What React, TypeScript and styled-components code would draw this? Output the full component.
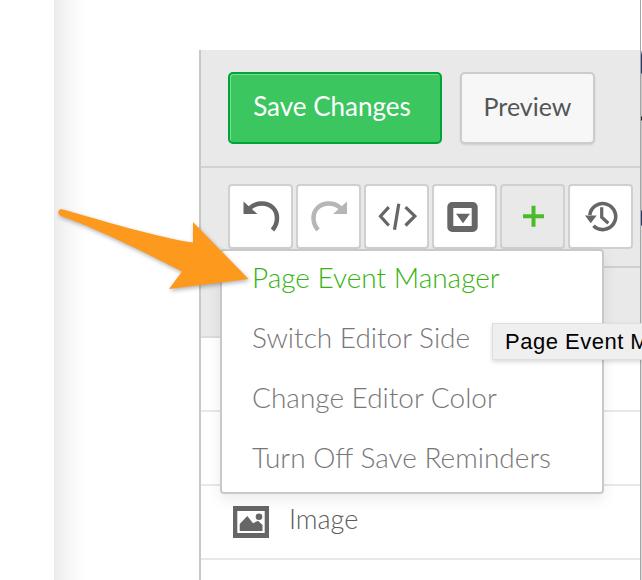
import React from 'react'
import styled, { createGlobalStyle } from 'styled-components'

const GlobalStyle = createGlobalStyle`
  html, body {
    margin: 0;
    padding: 0;
    background: #fff;
  }
  * {
    box-sizing: border-box;
  }
`

const FONT = `Lato, "Noto Sans", "Liberation Sans", sans-serif`

const Page = styled.div`
  position: relative;
  display: flex;
  width: 642px;
  height: 580px;
  overflow: hidden;
  background: #fff;
  font-family: ${FONT};
`

const Gutter = styled.div`
  flex: 0 0 54px;
`

const Shade = styled.div`
  flex: 0 0 145px;
  background: linear-gradient(to right, #ececec 0, #f6f6f6 14px, #fefefe 30px, #fff 40px);
`

const Panel = styled.div`
  flex: 0 0 441px;
  margin-top: 50px;
  display: flex;
  flex-direction: column;
  border-left: 2px solid #c8c8c8;
`

const ActionBar = styled.div`
  flex: 0 0 118px;
  display: flex;
  align-items: flex-start;
  gap: 18px;
  padding: 22px 0 0 27px;
  background: #e9e9e9;
  border-bottom: 2px solid #d2d2d2;
`

const ActionButton = styled.div<{ $primary?: boolean }>`
  height: 72px;
  display: flex;
  align-items: center;
  justify-content: center;
  padding: 0 ${(props) => (props.$primary ? '6px' : '0')} 4px 0;
  width: ${(props) => (props.$primary ? '214px' : '135px')};
  border-radius: 5px;
  font-size: ${(props) => (props.$primary ? '26px' : '25px')};
  font-weight: 400;
  color: ${(props) => (props.$primary ? '#fff' : '#555')};
  background: ${(props) => (props.$primary ? '#3bc65f' : '#f7f7f7')};
  border: 2px solid ${(props) => (props.$primary ? '#00a337' : '#cccccc')};
  box-shadow: ${(props) =>
    props.$primary
      ? 'inset 1px 1px 0 #7fdc97'
      : '0 1px 2px rgba(0, 0, 0, 0.12)'};
`

const Toolbar = styled.div`
  flex: 0 0 100px;
  display: flex;
  align-items: flex-start;
  gap: 3px;
  padding: 16px 0 0 27px;
  background: #e9e9e9;
  border-bottom: 2px solid #cfcfcf;
`

const ToolButton = styled.div<{ $active?: boolean }>`
  flex: 0 0 65px;
  height: 65px;
  display: flex;
  align-items: center;
  justify-content: center;
  border: 2px solid #d0d0d0;
  border-radius: 4px;
  background: ${(props) => (props.$active ? '#e9e9e9' : '#fff')};
`

const GreyStrip = styled.div`
  flex: 0 0 70px;
  background: #e9e9e9;
  border-bottom: 2px solid #dcdcdc;
`

const Row = styled.div`
  flex: 0 0 74px;
  display: flex;
  align-items: center;
  gap: 20px;
  padding-left: 32px;
  background: #fff;
  border-bottom: 2px solid #e8e8e8;
`

const RowLabel = styled.span`
  margin-bottom: 8px;
  font-size: 27px;
  font-weight: 300;
  color: #5c5c5c;
`

const EdgeStrip = styled.div`
  flex: 0 0 2px;
  border-left: 1px solid #a6a6a6;
  background: linear-gradient(
    to bottom,
    #fff 0,
    #fff 50px,
    #24386e 55px,
    #24386e 73px,
    #c8c8c8 74px,
    #c8c8c8 116px,
    #222 117px,
    #222 120px,
    #c8c8c8 121px,
    #c8c8c8 210px,
    #24386e 211px,
    #24386e 225px,
    #dcdcdc 226px,
    #dcdcdc 580px
  );
`

const Menu = styled.div`
  position: absolute;
  left: 220px;
  top: 249px;
  width: 384px;
  height: 245px;
  background: #fff;
  border: 2px solid #c9c9c9;
  border-radius: 4px;
  box-shadow: 0 6px 14px rgba(0, 0, 0, 0.08);
`

const MenuItem = styled.div<{ $active?: boolean }>`
  height: 60px;
  display: flex;
  align-items: center;
  padding: 0 0 8px 30px;
  font-size: 28px;
  font-weight: 300;
  color: ${(props) => (props.$active ? '#37b311' : '#777')};
`

const Tooltip = styled.div`
  position: absolute;
  left: 492px;
  top: 323px;
  width: 150px;
  height: 37px;
  display: flex;
  align-items: center;
  padding-left: 12px;
  overflow: hidden;
  white-space: nowrap;
  background: #efefef;
  border: 1px solid #dedede;
  border-right: 0;
  box-shadow: 0 2px 4px rgba(0, 0, 0, 0.15);
  font-family: 'Liberation Sans', Arial, sans-serif;
  font-size: 22px;
  letter-spacing: 0.5px;
  color: #000;
`

const ArrowSvg = styled.svg`
  position: absolute;
  left: 0;
  top: 0;
  filter: drop-shadow(1px 2px 2px rgba(0, 0, 0, 0.3));
`

const Icon = ({ children }: { children: React.ReactNode }) => (
  <svg width="40" height="40" viewBox="0 0 40 40" fill="none">
    {children}
  </svg>
)

const UndoShape = ({ color }: { color: string }) => (
  <>
    <path d="M2.5 4.5V17H16.5Z" fill={color} />
    <path
      d="M9 11C12 8 16 6.5 21 6.5C30 6.5 36 13 36 21C36 25.5 34.5 29.5 31.5 33"
      stroke={color}
      strokeWidth="4.5"
    />
  </>
)

const ImageIcon = () => (
  <svg width="36" height="32" viewBox="0 0 36 32">
    <rect width="36" height="32" fill="#666" />
    <rect x="4.3" y="5" width="27.4" height="22" fill="#fff" />
    <path d="M6.7 25V18L14.3 10L20 17.3L25 14.7L29.5 19V25Z" fill="#666" />
    <circle cx="26" cy="10.7" r="3.3" fill="#666" />
  </svg>
)

export default function App() {
  return (
    <>
      <GlobalStyle />
      <Page>
        <Gutter />
        <Shade />
        <Panel>
          <ActionBar>
            <ActionButton $primary>Save Changes</ActionButton>
            <ActionButton>Preview</ActionButton>
          </ActionBar>
          <Toolbar>
            <ToolButton>
              <Icon>
                <UndoShape color="#666" />
              </Icon>
            </ToolButton>
            <ToolButton>
              <Icon>
                <g transform="translate(40.5 0) scale(-1 1)">
                  <UndoShape color="#b6b6b6" />
                </g>
              </Icon>
            </ToolButton>
            <ToolButton>
              <Icon>
                <path
                  d="M11.8 10.2L3.5 19.2L11.8 28.5M21.8 6.8L17.5 32.8M28.5 10.2L37.8 19.2L28.5 28.5"
                  stroke="#666"
                  strokeWidth="3.2"
                />
              </Icon>
            </ToolButton>
            <ToolButton>
              <Icon>
                <rect x="5.3" y="8" width="24.4" height="24" rx="2" stroke="#666" strokeWidth="6" />
                <path d="M11 16.8H25L18 26.2Z" fill="#666" />
              </Icon>
            </ToolButton>
            <ToolButton $active>
              <Icon>
                <path d="M10 19.2H31M20.5 8.7V29.7" stroke="#4cbb2b" strokeWidth="4" />
              </Icon>
            </ToolButton>
            <ToolButton>
              <Icon>
                <path d="M8.8 18A13 13 0 1 1 12.5 28.8" stroke="#666" strokeWidth="3.6" />
                <path d="M4 18.5H15.7L9.7 26.2Z" fill="#666" />
                <path d="M20.7 10.2V20.2L27.3 26.2" stroke="#666" strokeWidth="3.2" />
              </Icon>
            </ToolButton>
          </Toolbar>
          <GreyStrip />
          <Row />
          <Row />
          <Row>
            <ImageIcon />
            <RowLabel>Image</RowLabel>
          </Row>
          <Row />
        </Panel>
        <EdgeStrip />
        <Menu>
          <MenuItem $active>Page Event Manager</MenuItem>
          <MenuItem>Switch Editor Side</MenuItem>
          <MenuItem>Change Editor Color</MenuItem>
          <MenuItem>Turn Off Save Reminders</MenuItem>
        </Menu>
        <Tooltip>Page Event Manager</Tooltip>
        <ArrowSvg width="642" height="580" viewBox="0 0 642 580">
          <path
            d="M61 209C100 220 150 235 186 241.5L193 242.5L193 222L248.5 279L169 289L182 271.5C150 255 100 230 60 215.5Q56 211 61 209Z"
            fill="#fd991d"
          />
        </ArrowSvg>
      </Page>
    </>
  )
}
